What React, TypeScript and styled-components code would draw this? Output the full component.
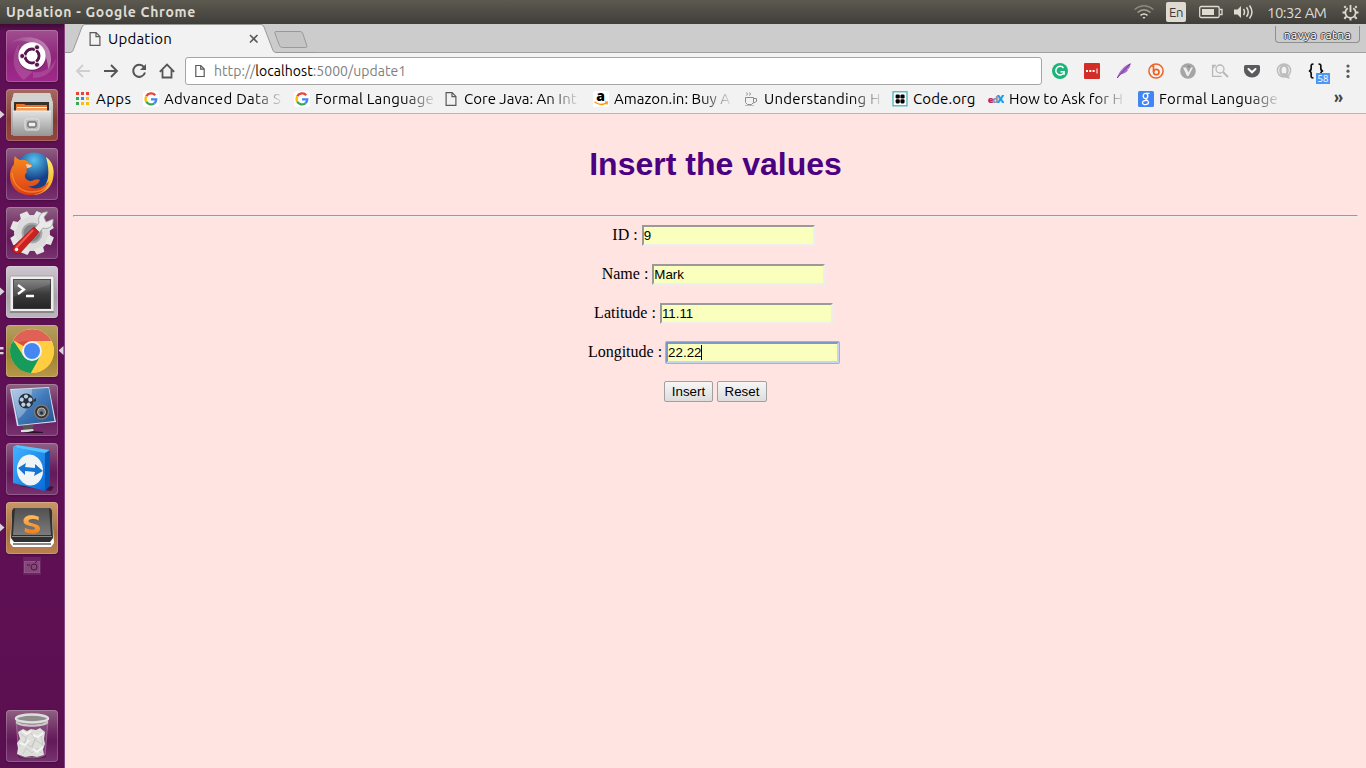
import React from "react";
import styled, { createGlobalStyle, css } from "styled-components";

const GlobalStyle = createGlobalStyle`
  * { box-sizing: border-box; }
  body { margin: 0; background: #ffe4e1; overflow: hidden; }
`;

const uiFont = `"Ubuntu", "Noto Sans", "Open Sans", sans-serif`;

const Desktop = styled.div`
  display: flex;
  flex-direction: column;
  width: 1366px;
  height: 768px;
  overflow: hidden;
  font-family: ${uiFont};
`;

/* ---------- system panel ---------- */
const Panel = styled.header`
  display: flex;
  align-items: center;
  height: 24px;
  flex: none;
  padding: 0 7px 0 6px;
  background: linear-gradient(#5c5a50, #3f3e39);
  color: #dfdbd2;
  font-size: 14px;
`;
const PanelTitle = styled.div`
  flex: 1;
  font-weight: 700;
  font-size: 14px;
  letter-spacing: 0.68px;
  line-height: 24px;
  white-space: nowrap;
`;
const PanelItem = styled.div<{ $w: number }>`
  display: flex;
  align-items: center;
  width: ${(p) => p.$w}px;
  height: 24px;
`;
const LangBadge = styled.span`
  width: 20px;
  height: 20px;
  border-radius: 2px;
  background: #dfdbd2;
  color: #3c3b37;
  font-size: 13px;
  line-height: 20px;
  text-align: center;
  letter-spacing: -0.4px;
`;
const Clock = styled.span`
  font-size: 15px;
  letter-spacing: -0.55px;
  white-space: nowrap;
`;

const Body = styled.div`
  display: flex;
  flex: 1;
  min-height: 0;
`;

/* ---------- launcher ---------- */
const Launcher = styled.nav`
  display: flex;
  flex-direction: column;
  align-items: center;
  gap: 7px;
  width: 65px;
  flex: none;
  padding: 6px 1px 6px 0;
  border-right: 1px solid #87467f;
  background: linear-gradient(#3e0a37, #5f1054 7px, #5f1054 70%, #5a0f50);
`;
const Tile = styled.div<{ $bg: string }>`
  position: relative;
  width: 52px;
  height: 52px;
  flex: none;
  border-radius: 4px;
  background: ${(p) => p.$bg};
  box-shadow: inset 0 0 0 1px rgba(255, 255, 255, 0.2), 0 1px 2px rgba(0, 0, 0, 0.25);
  svg { display: block; }
`;
const Pip = styled.i<{ $side: "left" | "right"; $double?: boolean }>`
  position: absolute;
  top: 21px;
  ${(p) => (p.$side === "left" ? css`left: -6px;` : css`right: -6px;`)}
  width: 5px;
  height: 9px;
  background: #d9d3d8;
  clip-path: ${(p) =>
    p.$double
      ? "polygon(0 10%, 80% 10%, 80% 38%, 0 38%, 0 66%, 80% 66%, 80% 92%, 0 92%)"
      : p.$side === "left"
        ? "polygon(0 0, 100% 50%, 0 100%)"
        : "polygon(100% 0, 0 50%, 100% 100%)"};
`;
const MiniTile = styled.div`
  width: 18px;
  height: 18px;
  margin-top: -4px;
  background: #6c2362;
`;
const Spacer = styled.div`
  flex: 1;
`;

/* ---------- browser ---------- */
const Browser = styled.div`
  display: flex;
  flex-direction: column;
  flex: 1;
  min-width: 0;
`;
const TabStrip = styled.div`
  display: flex;
  justify-content: space-between;
  height: 29px;
  flex: none;
  background: linear-gradient(#cccccc 28px, #a0a0a0 28px);
`;
const TabArea = styled.div`
  display: grid;
  svg { grid-area: 1 / 1; display: block; }
`;
const TabContent = styled.div`
  grid-area: 1 / 1;
  display: flex;
  align-items: center;
  width: 196px;
  height: 29px;
  padding-left: 22px;
  font-size: 15px;
  color: #000;
  z-index: 1;
`;
const TabTitle = styled.span`
  flex: 1;
  margin-left: 5px;
  letter-spacing: 0.2px;
`;
const Profile = styled.div`
  width: 85px;
  height: 17px;
  margin: 2px 6px 0 0;
  border: 1px solid #8f8f8f;
  border-top: 0;
  border-radius: 0 0 4px 4px;
  color: #fff;
  font-size: 12px;
  line-height: 18px;
  text-align: center;
  letter-spacing: 0.5px;
  text-shadow: 1px 0 #444, -1px 0 #444, 0 1px #444, 0 -1px #444;
`;
const Toolbar = styled.div`
  display: flex;
  align-items: center;
  height: 32px;
  flex: none;
  padding: 4px 8px 0 10px;
  background: #f2f2f2;
`;
const NavButton = styled.span`
  display: flex;
  width: 28px;
  flex: none;
  svg { display: block; }
`;
const Omnibox = styled.div`
  display: flex;
  align-items: center;
  width: 857px;
  height: 28px;
  flex: none;
  margin: 0 8px 0 -2px;
  padding-left: 8px;
  border: 1px solid #a6a6a6;
  border-radius: 3px;
  background: #fff;
  color: #808080;
  font-size: 14px;
  letter-spacing: 0.05px;
  b { font-weight: 400; color: #000; }
  span { margin-left: 8px; }
`;
const Ext = styled.span<{ $w?: number }>`
  display: flex;
  justify-content: center;
  width: ${(p) => p.$w ?? 32}px;
  flex: none;
  svg { display: block; overflow: visible; }
`;
const Bookmarks = styled.div`
  display: flex;
  align-items: center;
  height: 29px;
  flex: none;
  padding: 0 0 1px 10px;
  border-bottom: 1px solid #b6b4b6;
  background: #f2f2f2;
`;
const Bookmark = styled.div<{ $w: number }>`
  display: flex;
  align-items: center;
  gap: 5px;
  width: ${(p) => p.$w}px;
  flex: none;
  svg { display: block; flex: none; }
`;
const BookmarkLabel = styled.span<{ $ls: number; $fade?: boolean }>`
  font-size: 15px;
  line-height: 20px;
  letter-spacing: ${(p) => p.$ls}px;
  white-space: nowrap;
  color: #000;
  ${(p) => p.$fade && css`mask-image: linear-gradient(to right, #000 calc(100% - 30px), rgba(0, 0, 0, 0.1));`}
`;
const More = styled.span`
  margin-left: auto;
  margin-right: 23px;
  font-size: 16px;
  font-weight: 600;
  line-height: 18px;
  padding-bottom: 3px;
  color: #444;
`;

/* ---------- web page ---------- */
const Page = styled.main`
  flex: 1;
  padding: 32px 8px 0;
  background: #ffe4e1;
  color: #000;
  font: 16px "Liberation Serif", serif;
  text-align: center;
`;
const Heading = styled.h1`
  margin: 0 0 32px;
  font: bold 32px/37px "Liberation Sans", sans-serif;
  color: #4b0082;
`;
const Rule = styled.hr`
  margin: 0 0 8px;
  height: 2px;
  border: 1px solid;
  border-color: #9a9a9a #eee #eee #9a9a9a;
`;
const Row = styled.div`
  display: flex;
  justify-content: center;
  height: 39px;
  gap: 4px;
  padding-right: 4px;
  line-height: 19px;
`;
const Field = styled.div<{ $focus?: boolean }>`
  display: flex;
  align-items: center;
  width: 173px;
  height: 21px;
  border: 2px solid;
  border-color: #9a9a9a #eee #eee #9a9a9a;
  background: #faffbd;
  font: 13.333px "Liberation Sans", sans-serif;
  text-align: left;
  ${(p) =>
    p.$focus &&
    css`
      border-color: #7b98c8 #c6d6ee #c6d6ee #7b98c8;
      box-shadow: 0 0 0 1px #92b4f2;
      border-radius: 1px;
    `}
`;
const Caret = styled.i`
  width: 1px;
  height: 15px;
  background: #000;
`;
const Buttons = styled.div`
  display: flex;
  justify-content: center;
  gap: 4px;
`;
const Button = styled.button<{ $w: number }>`
  width: ${(p) => p.$w}px;
  height: 21px;
  padding: 0;
  border: 1px solid #a0a0a0;
  border-radius: 2px;
  background: linear-gradient(#f6f6f6, #dddddd);
  color: #000;
  font: 13.333px/18px "Liberation Sans", sans-serif;
`;

/* ---------- small icons ---------- */
const Doc = () => (
  <svg width="16" height="16" viewBox="0 0 16 16" fill="none" stroke="#5a5a5a" strokeWidth="1.2">
    <path d="M3.1 1.6h6l3.8 3.8v9H3.1zM9 1.6v4h3.9" />
  </svg>
);
const GoogleG = () => (
  <svg width="16" height="16" viewBox="0 0 16 16" fill="none" strokeWidth="2.3">
    <rect width="16" height="16" rx="3" fill="#fff" />
    <path d="M12.2 4.2A5.4 5.4 0 0 0 3.3 5.3" stroke="#ea4335" />
    <path d="M3.3 5.3a5.4 5.4 0 0 0 0 5.4" stroke="#fbbc05" />
    <path d="M3.3 10.7a5.4 5.4 0 0 0 8 1.6" stroke="#34a853" />
    <path d="M11.3 12.3c1.3-1 2-2.4 2-4H8" stroke="#4285f4" />
  </svg>
);
const AppsIcon = () => (
  <svg width="16" height="16" viewBox="0 0 16 16">
    {["#ea4335", "#ea4335", "#ea4335", "#34a853", "#4285f4", "#fbbc05", "#34a853", "#fbbc05", "#fbbc05"].map((c, i) => (
      <rect key={i} x={1 + (i % 3) * 5} y={1 + Math.floor(i / 3) * 5} width="3" height="3" fill={c} />
    ))}
  </svg>
);
const Amazon = () => (
  <svg width="16" height="16" viewBox="0 0 16 16">
    <rect width="16" height="16" rx="2" fill="#fff" />
    <text x="7.5" y="9.5" fontFamily="Open Sans" fontWeight="800" fontSize="14" textAnchor="middle">a</text>
    <path d="M1.5 10.8c4 3.4 8.5 3.3 12.5.8M12 10.8l2.5.2-.7 2.5" fill="none" stroke="#ff9900" strokeWidth="1.3" />
  </svg>
);
const Cup = () => (
  <svg width="16" height="16" viewBox="0 0 16 16" fill="none" stroke="#8c8c8c">
    <path d="M2.5 6.5h8v5l-2 2h-4l-2-2zM10.5 7.5h3v3l-3 1.5M3.500 1.500l1 1.500-1 1.500M6.500 1.500l1 1.500-1 1.500" />
    <path d="M2 14.500h9" stroke="#bbb" />
  </svg>
);
const CodeOrg = () => (
  <svg width="16" height="16" viewBox="0 0 16 16">
    <rect x="1" y=".8" width="14" height="14" fill="#fff" stroke="#49b4bd" strokeWidth="1.3" />
    {[[5.7, 5.5], [10.5, 5.5], [5.7, 10.3], [10.5, 10.3]].map(([x, y]) => (
      <rect key={`${x}-${y}`} x={x - 2.1} y={y - 2.1} width="4.2" height="4.2" rx="1.3" />
    ))}
  </svg>
);
const Edx = () => (
  <svg width="16" height="16" viewBox="0 0 16 16" fontFamily="Open Sans" fontWeight="800">
    <text x="-.3" y="11.5" fontSize="9.500" fill="#b72667">e</text>
    <text x="4.200" y="11.500" fontSize="9.500" fill="#8d9499">d</text>
    <text x="8.500" y="11.500" fontSize="11" fill="#1d9bea">X</text>
  </svg>
);
const OldGoogle = () => (
  <svg width="16" height="16" viewBox="0 0 16 16">
    <rect width="16" height="16" rx="1.5" fill="#4285f4" />
    <g fill="none" stroke="#fff" strokeWidth="1.3">
      <ellipse cx="7.5" cy="5" rx="2.3" ry="2.600" />
      <path d="M8 2.300h3.500M8.500 7.500c-1.500 1.200 1.800 1.800 2 3.700 0 3.200-6 3.200-6 .5 0-1.700 2-2.300 4.200-2.300" />
    </g>
  </svg>
);

/* ---------- launcher icons (52 x 52) ---------- */
const Defs = () => (
  <svg width="0" height="0" style={{ position: "absolute" }}>
    <defs>
      <linearGradient id="steel" x2="0" y2="1"><stop stopColor="#e3e3e3" /><stop offset="1" stopColor="#959595" /></linearGradient>
      <linearGradient id="dark" x2="0" y2="1"><stop stopColor="#777" /><stop offset=".5" stopColor="#3b3b3b" /><stop offset="1" stopColor="#252525" /></linearGradient>
      <linearGradient id="key" x2="0" y2="1"><stop stopColor="#505050" /><stop offset="1" stopColor="#7c7c7c" /></linearGradient>
      <linearGradient id="screen" x2="1" y2="1"><stop stopColor="#91b7df" /><stop offset=".5" stopColor="#3f78b8" /><stop offset="1" stopColor="#235292" /></linearGradient>
      <radialGradient id="globe" cx=".5" cy=".2"><stop stopColor="#55c3ee" /><stop offset="1" stopColor="#163f89" /></radialGradient>
      <linearGradient id="fox" x2="0" y2="1"><stop stopColor="#f58a1f" /><stop offset="1" stopColor="#dd3c16" /></linearGradient>
      <linearGradient id="yellow" x2="0" y2="1"><stop stopColor="#fff176" /><stop offset="1" stopColor="#f39a1c" /></linearGradient>
      <linearGradient id="tv" x2="1" y2="1"><stop stopColor="#42b3ff" /><stop offset="1" stopColor="#096ad9" /></linearGradient>
      <linearGradient id="sub" x2="0" y2="1"><stop stopColor="#ffbc60" /><stop offset="1" stopColor="#f07d18" /></linearGradient>
      <linearGradient id="swirl" x2="1" y2="0"><stop stopColor="#fff" stopOpacity=".05" /><stop offset="1" stopColor="#fff" stopOpacity=".4" /></linearGradient>
    </defs>
  </svg>
);
const Dash = () => (
  <svg width="52" height="52" viewBox="0 0 52 52" fill="none">
    <path d="M4 13C18 2 45 7 45 29c0 4-1 8-3 10 0-14-8-25-24-28-5-1-9 0-14 2z" fill="url(#swirl)" />
    <path d="M18 50C7 42 4 27 13 14c-2 12 2 24 14 28-3 2-6 5-9 8z" fill="#fff" fillOpacity=".14" />
    <path d="M27 42c12 2 19-6 23-13-1 12-11 19-23 19z" fill="#fff" fillOpacity=".13" />
    <circle cx="26" cy="27" r="14" fill="#57154a" fillOpacity=".45" />
    <circle cx="26" cy="26" r="13.700" fill="#fff" />
    <circle cx="26" cy="26" r="7" stroke="#58144c" strokeWidth="3" />
    <path d="M26 26H13M26 26l6.500-11M26 26l6.500 11" stroke="#fff" strokeWidth="1.200" />
    <circle cx="26" cy="26" r="5.300" fill="#fff" />
    {[[16.2, 26], [31, 17.3], [31, 34.7]].map(([x, y]) => (
      <circle key={y} cx={x} cy={y} r="2.500" fill="#58144c" stroke="#fff" strokeWidth=".8" />
    ))}
  </svg>
);
const Files = () => (
  <svg width="52" height="52" viewBox="0 0 52 52">
    <path d="M8 4h36l3 11v31H5V15z" fill="url(#steel)" />
    <path d="M8 4h36l3 10H5z" fill="#d1d2d0" />
    <path d="M8 13h35v9H8z" fill="#35302c" />
    <path d="M10 15h8l2 1h21v6H10z" fill="#e8732c" />
    <path d="M11 18h30v1H11z" fill="#fff" />
    <path d="M10 19h31v3H10z" fill="#f39a50" />
    <path d="M7 22h38v25H7z" fill="url(#steel)" />
    <path d="M7 22h38" stroke="#eee" />
    <rect x="19" y="30" width="14" height="11" rx="2" fill="#bcbcbc" stroke="#e5e5e5" />
    <rect x="22" y="33" width="8" height="5" rx="1" fill="#eee" stroke="#444" />
  </svg>
);
const Firefox = () => (
  <svg width="52" height="52" viewBox="0 0 52 52">
    <circle cx="28" cy="24" r="19.500" fill="url(#globe)" />
    <path d="M40 9c7 5 9 13 7 22-2 10-11 16-20 16 9-3 13-9 15-17 1-7 0-14-2-21z" fill="url(#yellow)" />
    <path d="M9 8c1 2 3 3 5 4 4-1 7 0 9 3l3 1c0 2-2 3-4 4-2 1-2 2-1 4-4 3-2 8 3 9 4 0 6-3 10-1-2 5-7 7-12 6 7 5 15 2 21-5-2 9-9 14-19 14C12 47 4 39 4 28c0-6 2-9 4-12 0-3 0-6 1-8z" fill="url(#fox)" />
    <path d="M20 16c3 0 5 1 6 2-1 1-3 2-5 2" fill="#f6ccb0" />
    <path d="M6 25c1 12 9 19 20 19 7 0 13-3 16-7" fill="none" stroke="#f7a337" strokeOpacity=".6" strokeWidth="1.500" />
  </svg>
);
const Settings = () => (
  <svg width="52" height="52" viewBox="0 0 52 52">
    <circle cx="26" cy="26" r="13.500" fill="none" stroke="#dcdcdc" strokeWidth="9" />
    {Array.from({ length: 8 }, (_, i) => (
      <path key={i} d="M21 10l1-6h8l1 6z" fill="#e5e5e5" transform={`rotate(${i * 45 + 22} 26 26)`} />
    ))}
    <circle cx="26" cy="26" r="9.500" fill="#85828a" stroke="#aaa" strokeWidth="2" />
    <path d="M28 22l5-6c-2-7 3-12 9-11l-4 5 2 5 7-3c1 7-4 11-10 9l-5 6z" fill="#e9e9e9" stroke="#999" strokeWidth=".8" />
    <path d="M28 20l5 5-18 20c-4 4-11 0-7-6z" fill="#cd211f" stroke="#941313" strokeWidth=".7" />
    <path d="M27 23L10 41" stroke="#f15c52" strokeWidth="2" />
    <circle cx="10.500" cy="42.500" r="1.800" fill="#eee" />
  </svg>
);
const Terminal = () => (
  <svg width="52" height="52" viewBox="0 0 52 52">
    <rect x="4" y="10" width="44" height="36" rx="1.500" fill="#eee" stroke="#a8a6a8" />
    <path d="M4 45h44v2H4z" fill="#8b888b" />
    <rect x="7.500" y="13.500" width="37" height="29" fill="url(#dark)" stroke="#3a3a3a" />
    <path d="M12 19l6 4.500-6 4.500M20 30h8" fill="none" stroke="#fff" strokeWidth="2.300" />
    <path d="M7 13h38v5L7 31z" fill="#fff" fillOpacity=".1" />
  </svg>
);
const Chrome = () => (
  <svg width="52" height="52" viewBox="0 0 52 52">
    <circle cx="26" cy="26" r="22" fill="#ffd143" />
    <path d="M26 26L7 15A22 22 0 0 1 45.500 16H26z" fill="#dc4b3e" />
    <path d="M7 15a22 22 0 0 0 18 33l9.500-17L26 26l-8.500 5z" fill="#179b5b" />
    <path d="M45.500 16H26v10l8.500 5L25 48a22 22 0 0 0 20.500-32z" fill="#ffcd40" />
    <circle cx="26" cy="26" r="10" fill="#f1f1f1" />
    <circle cx="26" cy="26" r="8" fill="#4487f3" />
    <path d="M5 19a22 22 0 0 1 42 0c-12-5-28-4-42 0z" fill="#fff" fillOpacity=".13" />
  </svg>
);
const Media = () => (
  <svg width="52" height="52" viewBox="0 0 52 52">
    <path d="M16 41h12l-2 5h-8z" fill="#555" />
    <path d="M15 46l12-1 1 3H15z" fill="#ddd" />
    <path d="M27 47l10 1v1H17z" fill="#28142a" />
    <path d="M4 5l39-2 7 35-39 4z" fill="#d5dce8" />
    <path d="M5.500 6l37-2 6 33-36 4z" fill="url(#screen)" />
    <path d="M6 6l20-1c0 12-5 24-14 30z" fill="#fff" fillOpacity=".3" />
    <circle cx="20" cy="17" r="7.500" fill="#29303a" />
    {[0, 72, 144, 216, 288].map((a) => (
      <circle key={a} cx="20" cy="12.500" r="2.100" fill="#b9d2e9" transform={`rotate(${a} 20 17)`} />
    ))}
    <path d="M27 16l3-2v3l-2 1" fill="#333" />
    <circle cx="35.500" cy="28" r="7" fill="#333" stroke="#777" strokeWidth="1.500" />
    <circle cx="35.500" cy="28" r="4" fill="#6f7880" stroke="#bbb" />
    <circle cx="35.500" cy="29" r="1.700" fill="#333" />
  </svg>
);
const TeamViewer = () => (
  <svg width="52" height="52" viewBox="0 0 52 52">
    <path d="M13 43l32 5 3-4-12-3z" fill="#27102b" fillOpacity=".7" />
    <path d="M7 4l4-2 33 5-5 4z" fill="#55c3ff" />
    <path d="M44 7v36l-5 5V10z" fill="#0557b8" />
    <path d="M7 4l32 6v38L7 40z" fill="url(#tv)" />
    <ellipse cx="24" cy="27" rx="13" ry="15.500" fill="#f1f4f6" transform="rotate(-8 24 27)" />
    <path d="M12 25l8-5-1 4 10 1v-4l8 7-9 5 1-4-10-1v4z" fill="#1575d5" />
  </svg>
);
const Sublime = () => (
  <svg width="52" height="52" viewBox="0 0 52 52">
    <path d="M6 12h40l2 29-3 4H7l-3-4z" fill="#fff" />
    <path d="M7 41h38v2H7z" fill="#8b8987" />
    <path d="M9 6h34c2 0 3 2 3 4l1 26-3 4H8l-3-4 1-26c0-2 1-4 3-4z" fill="#303030" />
    <path d="M9 6h34l2 27H7z" fill="url(#key)" />
    <path d="M6 34h40v1H6z" fill="#888" />
    <path d="M33 15l-.5 3.500c-4-2-10-2-10 .8 0 3 11.500 1.500 11.500 7.500 0 6-10 6-15.500 3l.5-4c4 2.500 10 2.700 10 .6 0-3.300-11.500-1.300-11.500-7.400 0-6 9-7 15.500-4z" fill="url(#sub)" />
  </svg>
);
const Trash = () => (
  <svg width="52" height="52" viewBox="0 0 52 52">
    <ellipse cx="26" cy="46" rx="14" ry="3" fill="#281027" fillOpacity=".5" />
    <path d="M10 11l3 34c5 4 21 4 26 0l3-34z" fill="#b78cae" fillOpacity=".25" stroke="#bb9eb5" strokeOpacity=".5" />
    <path d="M12 22l5-3 4 2 4-2 5 1 4-2 5 4-1 7 1 5-2 5 1 6-7 2-5-1-7 1-8-3 1-6-1-5 3-4z" fill="#dededb" />
    <path d="M15 24l5 4 4-6 5 7 7-4M13 36l6-4 6 5 4-7 8 5M17 44l3-6 6 5 5-5 4 5M20 28l-1 6M29 29l-3 9M35 26l2 9" fill="none" stroke="#bbb" strokeOpacity=".65" />
    <path d="M16 21l5 3 4-3M27 25l5 2 5-4M14 33l5 2 4-5M27 39l4 3 6-5" fill="none" stroke="#f4f4f4" strokeWidth="2" />
    <ellipse cx="26" cy="8.500" rx="16" ry="4" fill="#8e8d8c" stroke="#dedede" strokeWidth="2.500" />
    <path d="M10 10c3 6 29 6 32 0v3c-3 5-29 5-32 0z" fill="#c8c8c5" />
  </svg>
);

const violet = "linear-gradient(#906083, #6c2561 45%, #64195a 60%, #793370)";
const launcherItems = [
  { name: "dash", bg: "linear-gradient(#a04f91, #8f267b 50%, #a0298b)", Icon: Dash },
  { name: "files", bg: "linear-gradient(#a66a61, #853b35 60%, #95463f)", Icon: Files, left: true },
  { name: "firefox", bg: violet, Icon: Firefox },
  { name: "settings", bg: violet, Icon: Settings },
  { name: "terminal", bg: "linear-gradient(#d0c8d0, #a9a0aa 60%, #bdb5be)", Icon: Terminal, left: true },
  { name: "chrome", bg: "linear-gradient(#b49e61, #a08331 60%, #b8984c)", Icon: Chrome, left: true, double: true, right: true },
  { name: "media", bg: violet, Icon: Media },
  { name: "teamviewer", bg: violet, Icon: TeamViewer },
  { name: "sublime", bg: "linear-gradient(#c99769, #a86e3c 60%, #ba8050)", Icon: Sublime, left: true },
];

const bookmarks = [
  { text: "Apps", Icon: AppsIcon, w: 68, ls: 0.4 },
  { text: "Advanced Data S", Icon: GoogleG, w: 151, ls: 0.3, fade: true },
  { text: "Formal Language", Icon: GoogleG, w: 149, ls: 0.2, fade: true },
  { text: "Core Java: An Int", Icon: Doc, w: 150, ls: 0, fade: true },
  { text: "Amazon.in: Buy A", Icon: Amazon, w: 150, ls: 0, fade: true },
  { text: "Understanding H", Icon: Cup, w: 149, ls: 0.2, fade: true },
  { text: "Code.org", Icon: CodeOrg, w: 96, ls: 0.1 },
  { text: "How to Ask for H", Icon: Edx, w: 150, ls: 0, fade: true },
  { text: "Formal Language", Icon: OldGoogle, w: 150, ls: 0.2, fade: true },
];

const fields = [
  { label: "ID :", value: "9" },
  { label: "Name :", value: "Mark" },
  { label: "Latitude :", value: "11.11" },
  { label: "Longitude :", value: "22.22", focus: true },
];

const Extensions = () => (
  <>
    <Ext $w={20}>
      <svg width="16" height="16" viewBox="0 0 16 16" fill="none"><circle cx="8" cy="8" r="8" fill="#1cb47a" /><path d="M11.5 5A4.300 4.300 0 1 0 12 9.500M8.500 8.700h3.600v3" stroke="#fff" strokeWidth="1.500" /></svg>
    </Ext>
    <Ext $w={44}>
      <svg width="16" height="16" viewBox="0 0 16 16"><rect width="16" height="16" rx="1" fill="#d32d27" /><path d="M2 7h2v2H2zM5.300 7h2v2h-2zM8.600 7h2v2h-2zM12.500 5.500h1v5h-1z" fill="#fff" /></svg>
    </Ext>
    <Ext $w={20}>
      <svg width="16" height="16" viewBox="0 0 16 16"><path d="M1 15C3 8 9 2 15 0c-1 4-2 6-4 7l1 .5C10 10 7 11 4 11.500L2 15z" fill="#a66bc9" /><path d="M1 15L14 1" stroke="#6e3399" /></svg>
    </Ext>
    <Ext $w={44}>
      <svg width="16" height="16" viewBox="0 0 16 16" fill="none" stroke="#ee6123"><circle cx="8" cy="8" r="7.100" strokeWidth="1.500" /><path d="M3.500 3h2v6" strokeWidth="1.700" /><circle cx="8.300" cy="9" r="2.700" strokeWidth="1.700" /></svg>
    </Ext>
    <Ext $w={20}>
      <svg width="16" height="16" viewBox="0 0 16 16"><circle cx="8" cy="8" r="7.800" fill="#a5a5a5" /><path d="M3 4.500h3l2.500 5L11 4.500h2L8.500 13H7z" fill="#eee" /><path d="M8 3l2 1" stroke="#777" /></svg>
    </Ext>
    <Ext $w={44}>
      <svg width="16" height="16" viewBox="0 0 16 16" fill="none" stroke="#b8b8b8" strokeWidth="1.300"><path d="M4 2.500H.6v10.800h9M.6 4h2" /><circle cx="8" cy="6" r="4" /><path d="M11 9l5 5" strokeWidth="2" /></svg>
    </Ext>
    <Ext $w={20}>
      <svg width="16" height="16" viewBox="0 0 16 16"><path d="M1.500 2h13Q16 2 16 3.500v4a8 7 0 0 1-16 0v-4Q0 2 1.500 2z" fill="#5b5b5d" /><path d="M4.500 6L8 9.300 11.500 6" fill="none" stroke="#fff" strokeWidth="2" strokeLinecap="round" /></svg>
    </Ext>
    <Ext $w={44}>
      <svg width="16" height="16" viewBox="0 0 16 16" fill="none" stroke="#bcbcbc"><ellipse cx="8" cy="7.500" rx="6.600" ry="6.500" strokeWidth="1.500" /><ellipse cx="8" cy="7.500" rx="3.600" ry="5" strokeWidth="2.400" /><path d="M7 11c3-1 2 4 6.500 3.500" strokeWidth="2" /></svg>
    </Ext>
    <Ext $w={22}>
      <svg width="18" height="16" viewBox="0 0 18 16">
        <path d="M5.500 1C2.500 1 3.200 3 3.200 5S2.700 8 .8 8c1.900 0 2.400 1 2.400 3s-.7 4 2.300 4M10.500 1c3 0 2.300 2 2.300 4s.5 3 2.400 3c-1.900 0-2.400 1-2.400 3" fill="none" stroke="#111" strokeWidth="1.700" />
        <rect x="8" y="10" width="14" height="11" fill="#4a97f8" />
        <text x="15" y="19" textAnchor="middle" fontFamily="Open Sans" fontSize="9.500" fill="#fff">58</text>
      </svg>
    </Ext>
    <Ext $w={40}>
      <svg width="4" height="16" viewBox="0 0 4 16" fill="#5a5a5a"><circle cx="2" cy="3" r="1.600" /><circle cx="2" cy="8.200" r="1.600" /><circle cx="2" cy="13.400" r="1.600" /></svg>
    </Ext>
  </>
);

export default function App() {
  return (
    <Desktop>
      <GlobalStyle />
      <Defs />
      <Panel>
        <PanelTitle>Updation - Google Chrome</PanelTitle>
        <PanelItem $w={32}>
          <svg width="20" height="16" viewBox="0 0 20 16" fill="none" strokeWidth="1.500"><path d="M.5 5.500Q10-2 19.500 5.500" stroke="#8a887f" /><path d="M3.500 8.500Q10 3 16.500 8.500" stroke="#a5a298" /><path d="M6.500 11.300Q10 8.500 13.500 11.300" stroke="#dfdbd2" /><path d="M8.500 13h3L10 15z" fill="#dfdbd2" /></svg>
        </PanelItem>
        <PanelItem $w={33}><LangBadge>En</LangBadge></PanelItem>
        <PanelItem $w={35}>
          <svg width="24" height="14" viewBox="0 0 24 14" fill="none" stroke="#dfdbd2" strokeWidth="1.300"><rect x=".7" y="1.500" width="19.500" height="11" rx="1.500" /><path d="M3 4h12v6H3z" fill="#dfdbd2" stroke="none" /><path d="M21 4.500h2v5h-2" /></svg>
        </PanelItem>
        <PanelItem $w={33}>
          <svg width="21" height="16" viewBox="0 0 21 16" fill="none" stroke="#dfdbd2" strokeWidth="1.500"><path d="M0 5.500h3.500L7 2v12l-3.500-3.500H0z" fill="#dfdbd2" stroke="none" /><path d="M9.500 5q2 3 0 6M12.500 3.200q3.500 4.800 0 9.600M15.500 1.500q5 6.500 0 13" /></svg>
        </PanelItem>
        <PanelItem $w={75}><Clock>10:32 AM</Clock></PanelItem>
        <svg width="17" height="17" viewBox="0 0 17 17" fill="none" stroke="#dfdbd2">
          <path d="M5.800 4.200a5.200 5.200 0 1 0 5.400 0" strokeWidth="1.800" /><path d="M8.500 1v7" strokeWidth="1.800" />
          <path d="M3.800 3.800L2.300 2.300M13.200 3.800l1.500-1.500M3 8.500H.5M14 8.500h2.500M4.200 12.800l-1.900 1.900M12.800 12.800l1.900 1.900M8.500 14v2.500" strokeWidth="2" />
        </svg>
      </Panel>
      <Body>
        <Launcher>
          {launcherItems.map(({ name, bg, Icon, left, double, right }) => (
            <Tile key={name} $bg={bg}>
              <Icon />
              {left && <Pip $side="left" $double={double} />}
              {right && <Pip $side="right" />}
            </Tile>
          ))}
          <MiniTile>
            <svg width="18" height="18" viewBox="0 0 18 18" fill="none" stroke="#501247"><rect x="1.500" y="4.500" width="15" height="11" fill="#854779" stroke="#8d5684" /><circle cx="11" cy="10" r="3" /><path d="M4 8h3M12 6l2-2" /></svg>
          </MiniTile>
          <Spacer />
          <Tile $bg={violet}><Trash /></Tile>
        </Launcher>
        <Browser>
          <TabStrip>
            <TabArea>
              <svg width="250" height="29" viewBox="0 0 250 29">
                <path d="M0 28.500h5q2 0 3-2L17 3q1-2.500 3-2.500h176q2 0 3 2.500l9 23.500q1 2 3 2V29H0z" fill="#f2f2f2" />
                <path d="M0 28.500h5q2 0 3-2L17 3q1-2.500 3-2.500h176q2 0 3 2.500l9 23.500q1 2 3 2h39" fill="none" stroke="#999" />
                <path d="M211 7.500h24q2 0 2.800 2l4 12q.8 2-1.500 2h-23q-2 0-2.800-2l-4.500-12q-.8-2 1-2z" fill="#c5c5c5" stroke="#999" />
              </svg>
              <TabContent>
                <Doc />
                <TabTitle>Updation</TabTitle>
                <svg width="14" height="14" viewBox="0 0 14 14" stroke="#5a5a5a" strokeWidth="1.600"><path d="M3 3l7.500 7.500M10.500 3L3 10.500" /></svg>
              </TabContent>
            </TabArea>
            <Profile>navya ratna</Profile>
          </TabStrip>
          <Toolbar>
            <NavButton><svg width="16" height="16" viewBox="0 0 16 16" fill="none" stroke="#cfcfcf" strokeWidth="1.900"><path d="M15 8H2.500M8 2L2 8l6 6" /></svg></NavButton>
            <NavButton><svg width="16" height="16" viewBox="0 0 16 16" fill="none" stroke="#555" strokeWidth="1.900"><path d="M1 8h12.500M8 2l6 6-6 6" /></svg></NavButton>
            <NavButton><svg width="16" height="16" viewBox="0 0 16 16" fill="none" stroke="#555" strokeWidth="2"><path d="M13 4.200A6 6 0 1 0 14 9.500" /><path d="M15 1v6H9z" fill="#555" stroke="none" /></svg></NavButton>
            <NavButton><svg width="16" height="16" viewBox="0 0 16 16" fill="none" stroke="#555" strokeWidth="1.800"><path d="M.8 8.800L8 1.500l7.200 7.300M3.500 7v7.500h9V7" /></svg></NavButton>
            <Omnibox>
              <svg width="12" height="14" viewBox="0 0 12 14" fill="none" stroke="#5a5a5a" strokeWidth="1.200"><path d="M1.800 1.500h5l3.400 3.400v7.600H1.800zM6.700 1.500v3.600h3.500" /></svg>
              <span>http://<b>localhost</b>:5000/update1</span>
            </Omnibox>
            <Extensions />
          </Toolbar>
          <Bookmarks>
            {bookmarks.map(({ text, Icon, w, ls, fade }, i) => (
              <Bookmark key={i} $w={w}>
                <Icon />
                <BookmarkLabel $ls={ls} $fade={fade}>{text}</BookmarkLabel>
              </Bookmark>
            ))}
            <More>»</More>
          </Bookmarks>
          <Page>
            <Heading>Insert the values</Heading>
            <Rule />
            {fields.map(({ label, value, focus }) => (
              <Row key={label}>
                <label>{label}</label>
                <Field $focus={focus}>{value}{focus && <Caret />}</Field>
              </Row>
            ))}
            <Buttons>
              <Button $w={49}>Insert</Button>
              <Button $w={50}>Reset</Button>
            </Buttons>
          </Page>
        </Browser>
      </Body>
    </Desktop>
  );
}
